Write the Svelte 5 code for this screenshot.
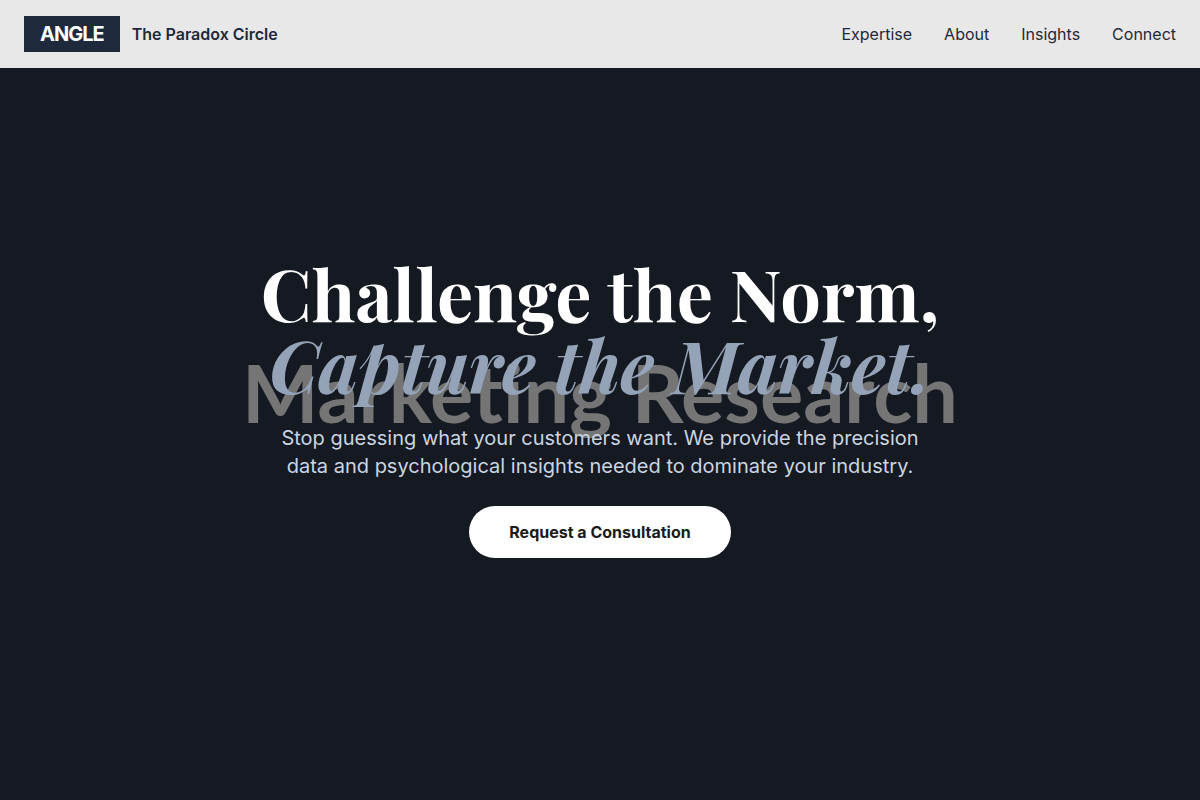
<script>
	const links = ['Expertise', 'About', 'Insights', 'Connect'];
</script>

<div class="page">
	<header>
		<a class="brand" href="#top">
			<span class="logo">ANGLE</span>
			<span class="name">The Paradox Circle</span>
		</a>
		<nav>
			{#each links as link}
				<a href="#{link.toLowerCase()}">{link}</a>
			{/each}
		</nav>
	</header>

	<main id="top">
		<div class="backdrop">Marketing Research</div>
		<section class="hero">
			<h1>Challenge the Norm,<br /><em>Capture the Market.</em></h1>
			<p>
				Stop guessing what your customers want. We provide the precision data and psychological
				insights needed to dominate your industry.
			</p>
			<button type="button">Request a Consultation</button>
		</section>
	</main>
</div>

<style>
	:global(body) {
		margin: 0;
		background: #151921;
	}

	.page {
		min-height: 100vh;
		display: flex;
		flex-direction: column;
		font-family: Inter, 'Liberation Sans', sans-serif;
		font-size: 16px;
		line-height: 24px;
	}

	header {
		display: flex;
		justify-content: space-between;
		align-items: center;
		padding: 16px 24px;
		background: #e8e8e8;
	}

	a {
		color: #1e293b;
		text-decoration: none;
	}

	.brand {
		display: flex;
		align-items: center;
		gap: 12px;
	}

	.logo {
		padding: 4px 16px;
		background: #1e293b;
		color: #fff;
		font-size: 20px;
		font-weight: 700;
		line-height: 28px;
		letter-spacing: -1px;
	}

	.name {
		font-weight: 600;
	}

	nav {
		display: flex;
		gap: 32px;
	}

	main {
		position: relative;
		flex: 1;
		display: flex;
		justify-content: center;
		align-items: center;
		padding: 0 24px;
		background: #151921;
	}

	/* oversized caption behind the headline */
	.backdrop {
		position: absolute;
		inset: 0;
		display: flex;
		justify-content: center;
		align-items: center;
		padding-bottom: 84px;
		color: #757575;
		font-family: Lato, sans-serif;
		font-size: 81px;
		font-weight: 700;
		font-variant-ligatures: none;
		line-height: 100px;
		white-space: nowrap;
	}

	.hero {
		position: relative;
		display: flex;
		flex-direction: column;
		align-items: center;
		padding-bottom: 54px;
		text-align: center;
	}

	h1 {
		margin: 0 0 24px;
		color: #fff;
		font-family: 'Playfair Display', 'Liberation Serif', serif;
		font-size: 72px;
		font-weight: 700;
		line-height: 72px;
	}

	em {
		color: #94a3b8;
	}

	p {
		max-width: 672px;
		margin: 0 0 26px;
		color: #cbd5e1;
		font-size: 20px;
		line-height: 28px;
	}

	button {
		padding: 14px 40px;
		border: 0;
		border-radius: 26px;
		background: #fff;
		color: #1a1a1a;
		font: inherit;
		font-weight: 700;
		cursor: pointer;
	}
</style>
